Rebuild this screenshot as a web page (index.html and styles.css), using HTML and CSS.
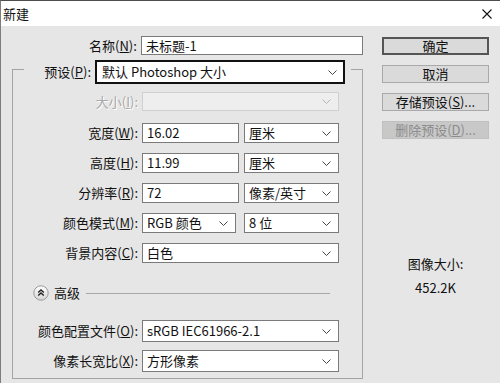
FILE: index.html
```html
<!DOCTYPE html>
<html lang="zh-CN">
<head>
    <meta charset="UTF-8">
    <title>新建</title>
    <link rel="stylesheet" href="styles.css">
</head>
<body>
    <div class="window">
        <div class="titleBar">
            <span class="titleText">新建</span>
            <svg class="closeIcon" width="10" height="10" viewBox="0 0 10 10">
                <path d="M0.5 0.5 L9.5 9.5 M9.5 0.5 L0.5 9.5" stroke="#111" stroke-width="1.1" fill="none"/>
            </svg>
        </div>
        <div class="main">
            <div class="formColumn">
                <div class="row nameRow">
                    <span class="label wideLabel">名称(<u>N</u>):</span>
                    <div class="input nameInput">未标题-1</div>
                </div>
                <fieldset class="group">
                    <legend class="presetLegend">
                        <div class="presetRow">
                            <span class="label presetLabel">预设(<u>P</u>):</span>
                            <div class="select focused presetSelect">
                                <span>默认 Photoshop 大小</span>
                                <svg class="arrow" width="9" height="5" viewBox="0 0 9 5"><path d="M0.5 0.5 L4.5 4.5 L8.5 0.5" stroke="#444" fill="none"/></svg>
                            </div>
                        </div>
                    </legend>

                    <div class="row">
                        <span class="label disabledLabel">大小(<u>I</u>):</span>
                        <div class="select disabled fullWidth sizeSelect">
                            <span></span>
                            <svg class="arrow" width="9" height="5" viewBox="0 0 9 5"><path d="M0.5 0.5 L4.5 4.5 L8.5 0.5" stroke="#b5b5b5" fill="none"/></svg>
                        </div>
                    </div>

                    <div class="row widthRow">
                        <span class="label">宽度(<u>W</u>):</span>
                        <div class="input numberInput">16.02</div>
                        <div class="select unitSelect">
                            <span>厘米</span>
                            <svg class="arrow" width="9" height="5" viewBox="0 0 9 5"><path d="M0.5 0.5 L4.5 4.5 L8.5 0.5" stroke="#444" fill="none"/></svg>
                        </div>
                    </div>

                    <div class="row spacedRow">
                        <span class="label">高度(<u>H</u>):</span>
                        <div class="input numberInput">11.99</div>
                        <div class="select unitSelect">
                            <span>厘米</span>
                            <svg class="arrow" width="9" height="5" viewBox="0 0 9 5"><path d="M0.5 0.5 L4.5 4.5 L8.5 0.5" stroke="#444" fill="none"/></svg>
                        </div>
                    </div>

                    <div class="row spacedRow">
                        <span class="label">分辨率(<u>R</u>):</span>
                        <div class="input numberInput">72</div>
                        <div class="select unitSelect">
                            <span>像素/英寸</span>
                            <svg class="arrow" width="9" height="5" viewBox="0 0 9 5"><path d="M0.5 0.5 L4.5 4.5 L8.5 0.5" stroke="#444" fill="none"/></svg>
                        </div>
                    </div>

                    <div class="row spacedRow">
                        <span class="label">颜色模式(<u>M</u>):</span>
                        <div class="select modeSelect">
                            <span>RGB 颜色</span>
                            <svg class="arrow" width="9" height="5" viewBox="0 0 9 5"><path d="M0.5 0.5 L4.5 4.5 L8.5 0.5" stroke="#444" fill="none"/></svg>
                        </div>
                        <div class="select unitSelect bitSelect">
                            <span>8 位</span>
                            <svg class="arrow" width="9" height="5" viewBox="0 0 9 5"><path d="M0.5 0.5 L4.5 4.5 L8.5 0.5" stroke="#444" fill="none"/></svg>
                        </div>
                    </div>

                    <div class="row spacedRow">
                        <span class="label">背景内容(<u>C</u>):</span>
                        <div class="select fullWidth">
                            <span>白色</span>
                            <svg class="arrow" width="9" height="5" viewBox="0 0 9 5"><path d="M0.5 0.5 L4.5 4.5 L8.5 0.5" stroke="#444" fill="none"/></svg>
                        </div>
                    </div>

                    <div class="advancedRow">
                        <svg class="advancedIcon" width="16" height="16" viewBox="0 0 16 16">
                            <defs>
                                <linearGradient id="knob" x1="0" y1="0" x2="0" y2="1">
                                    <stop offset="0" stop-color="#ffffff"/>
                                    <stop offset="1" stop-color="#d4d4d4"/>
                                </linearGradient>
                            </defs>
                            <circle cx="8" cy="8" r="7.2" fill="url(#knob)" stroke="#9a9a9a"/>
                            <path d="M5.2 7.6 L8 4.9 L10.8 7.6 M5.2 10.6 L8 7.9 L10.8 10.6" stroke="#222" stroke-width="1.4" fill="none"/>
                        </svg>
                        <span class="advancedText">高级</span>
                        <div class="advancedLine"></div>
                    </div>

                    <div class="row profileRow">
                        <span class="label">颜色配置文件(<u>O</u>):</span>
                        <div class="select fullWidth tall">
                            <span>sRGB IEC61966-2.1</span>
                            <svg class="arrow" width="9" height="5" viewBox="0 0 9 5"><path d="M0.5 0.5 L4.5 4.5 L8.5 0.5" stroke="#444" fill="none"/></svg>
                        </div>
                    </div>

                    <div class="row ratioRow">
                        <span class="label">像素长宽比(<u>X</u>):</span>
                        <div class="select fullWidth tall">
                            <span>方形像素</span>
                            <svg class="arrow" width="9" height="5" viewBox="0 0 9 5"><path d="M0.5 0.5 L4.5 4.5 L8.5 0.5" stroke="#444" fill="none"/></svg>
                        </div>
                    </div>
                </fieldset>
            </div>

            <div class="sideColumn">
                <div class="button defaultButton">确定</div>
                <div class="button">取消</div>
                <div class="button">存储预设(<u>S</u>)...</div>
                <div class="button disabledButton">删除预设(<u>D</u>)...</div>
                <div class="imageInfo">
                    <p class="infoLabel">图像大小:</p>
                    <p class="infoValue">452.2K</p>
                </div>
            </div>
        </div>
    </div>
</body>
</html>
```

FILE: styles.css
```css
*{
    box-sizing: border-box;
}

body{
    margin: 0;
    background-color: #e6e6e6;
    font-family: "Noto Sans CJK SC", "Noto Sans", sans-serif;
    font-size: 13px;
    color: #111;
}

u{
    text-decoration: underline;
    text-underline-offset: 1px;
}

.window{
    width: 500px;
    height: 383px;
    border-top: 1px solid #4d4d4d;
    border-left: 1px solid #7d7d7d;
    background-color: #e6e6e6;
    overflow: hidden;
}

.titleBar{
    height: 25px;
    background: #ffffff;
    display: flex;
    align-items: center;
    justify-content: space-between;
    padding: 0 8px 0 2px;
}

.titleText{
    line-height: 16px;
}

.main{
    display: flex;
    flex-direction: row;
}

.formColumn{
    width: 362px;
    padding-left: 11px;
}

.row{
    display: flex;
    flex-direction: row;
    align-items: center;
    gap: 4px;
}

.label{
    width: 125px;
    text-align: right;
    white-space: nowrap;
    line-height: 16px;
}

.wideLabel{
    width: 126px;
}

.nameRow{
    margin-top: 10px;
}

.input,
.select{
    height: 20px;
    background: #ffffff;
    border: 1px solid #7a7a7a;
    padding: 0 7px 0 4px;
    line-height: 18px;
    white-space: nowrap;
}

.select{
    display: flex;
    align-items: center;
    justify-content: space-between;
}

.nameInput{
    width: 224px;
    height: 19px;
    line-height: 17px;
}

.group{
    margin: 5px 0 0 0;
    padding: 14px 0 6px 0;
    width: 351px;
    min-width: 0;
    border: 1px solid #a4a4a4;
}

.presetLegend{
    margin-left: 11px;
    padding: 0 6px 0 0;
}

.presetRow{
    display: flex;
    flex-direction: row;
    align-items: flex-start;
    gap: 4px;
    height: 18px;
}

.presetLabel{
    width: 67px;
    line-height: 24px;
}

.presetSelect{
    width: 250px;
    height: 24px;
    line-height: 20px;
    flex-shrink: 0;
}

.focused{
    border: 2px solid #111;
    padding-left: 5px;
    padding-right: 6px;
}

.fullWidth{
    width: 197px;
}

.sizeSelect{
    height: 19px;
    background: #eeeeee;
    border-color: #d0d0d0;
}

.disabledLabel{
    color: #a9a9a9;
    text-shadow: 1px 1px 0 #ffffff;
}

.widthRow{
    margin-top: 12px;
}

.spacedRow{
    margin-top: 10px;
}

.numberInput{
    width: 97px;
}

.unitSelect{
    width: 95px;
    margin-left: 1px;
}

.modeSelect{
    width: 94px;
}

.bitSelect{
    margin-left: 4px;
}

.advancedRow{
    display: flex;
    flex-direction: row;
    align-items: center;
    height: 18px;
    margin-top: 21px;
    padding-left: 20px;
    padding-right: 32px;
}

.advancedText{
    margin-left: 5px;
    line-height: 16px;
}

.advancedLine{
    flex: 1;
    height: 1px;
    margin-left: 6px;
    background: #a8a8a8;
}

.profileRow{
    margin-top: 18px;
}

.ratioRow{
    margin-top: 8px;
}

.tall{
    height: 22px;
    line-height: 20px;
}

.sideColumn{
    margin-left: 19px;
    margin-top: 11px;
    width: 107px;
    display: flex;
    flex-direction: column;
    gap: 10px;
}

.button{
    height: 18px;
    background: #dadada;
    border: 1px solid #a9a9a9;
    text-align: center;
    line-height: 16px;
}

.defaultButton{
    border: 2px solid #555555;
    line-height: 14px;
}

.disabledButton{
    background: #c8c8c8;
    border-color: #c0c0c0;
    color: #8c8c8c;
}

.imageInfo{
    margin-top: 107px;
    text-align: center;
}

.infoLabel,
.infoValue{
    margin: 0;
    line-height: 16px;
}

.infoValue{
    margin-top: 8px;
}
```
